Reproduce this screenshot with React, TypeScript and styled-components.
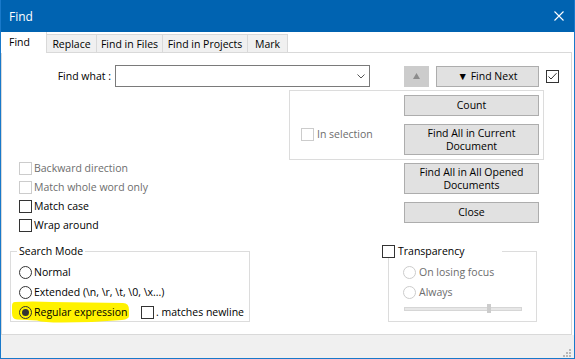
import React from "react";
import styled, { createGlobalStyle } from "styled-components";

const Global = createGlobalStyle`
  html, body { margin: 0; padding: 0; background: #ffffff; }
  body {
    font-family: "Open Sans", "Segoe UI", sans-serif;
    font-size: 10.5px;
    color: #000000;
  }
  * { box-sizing: border-box; }
`;

const Window = styled.div`
  width: 575px;
  height: 359px;
  display: flex;
  flex-direction: column;
  border: 1px solid #1979ca;
  border-top: none;
  background: #ffffff;
`;

const TitleBar = styled.div`
  height: 32px;
  flex: none;
  background: #0063b1;
  color: #ffffff;
  display: flex;
  align-items: center;
  justify-content: space-between;
  padding: 0 10px 0 8px;
  font-size: 12px;
`;

const TabStrip = styled.div`
  height: 20px;
  flex: none;
  display: flex;
  align-items: flex-end;
`;

const Tab = styled.div<{ $w: number; $active?: boolean }>`
  width: ${(p) => p.$w}px;
  flex: none;
  white-space: nowrap;
  ${(p) =>
    p.$active
      ? `
    height: 21px;
    margin-bottom: -1px;
    position: relative;
    z-index: 1;
    background: #ffffff;
    border-right: 1px solid #d9d9d9;
    padding-left: 8px;
    line-height: 20px;
  `
      : `
    height: 18px;
    margin-left: -1px;
    background: #f0f0f0;
    border: 1px solid #d9d9d9;
    border-bottom: none;
    text-align: center;
    line-height: 18px;
  `}
`;

const Panel = styled.div`
  height: 283px;
  flex: none;
  margin-right: 2px;
  border: 1px solid #d9d9d9;
  display: flex;
  flex-direction: column;
`;

const StatusStrip = styled.div`
  flex: 1;
  background: #f0f0f0;
  display: flex;
  justify-content: flex-end;
  align-items: flex-end;
  padding: 0 3px 1px 0;
`;

const TopRow = styled.div`
  margin-top: 12px;
  height: 22px;
  display: flex;
  align-items: center;
`;

const FieldLabel = styled.div`
  width: 109px;
  text-align: right;
  white-space: nowrap;
`;

const Combo = styled.div`
  margin-left: 4px;
  width: 255px;
  height: 22px;
  border: 1px solid #7a7a7a;
  display: flex;
  justify-content: flex-end;
  align-items: center;
  padding-right: 4px;
`;

const Button = styled.button<{ $w?: number; $h?: number; $ml?: number }>`
  width: ${(p) => p.$w ?? 135}px;
  height: ${(p) => p.$h ?? 21}px;
  margin: 0 0 0 ${(p) => p.$ml ?? 0}px;
  flex: none;
  padding: 0;
  font: inherit;
  color: #000000;
  line-height: 13px;
  background: #e1e1e1;
  border: 1px solid #adadad;
  display: flex;
  align-items: center;
  justify-content: center;
  text-align: center;
`;

const ArrowButton = styled.div`
  margin-left: 34px;
  width: 25px;
  height: 21px;
  flex: none;
  background: #cccccc;
  display: flex;
  align-items: center;
  justify-content: center;
`;

const Box = styled.span<{ $disabled?: boolean; $ml?: number }>`
  width: 13px;
  height: 13px;
  flex: none;
  margin-left: ${(p) => p.$ml ?? 0}px;
  border: 1px solid ${(p) => (p.$disabled ? "#cccccc" : "#333333")};
  background: #ffffff;
  display: flex;
  align-items: center;
  justify-content: center;
`;

const Circle = styled.span<{ $disabled?: boolean }>`
  width: 13px;
  height: 13px;
  flex: none;
  border-radius: 50%;
  border: 1px solid ${(p) => (p.$disabled ? "#cccccc" : "#333333")};
  display: flex;
  align-items: center;
  justify-content: center;
`;

const Dot = styled.span`
  width: 7px;
  height: 7px;
  border-radius: 50%;
  background: #333333;
`;

const OptionRow = styled.div<{ $disabled?: boolean; $gap?: number }>`
  display: flex;
  align-items: center;
  gap: ${(p) => p.$gap ?? 2}px;
  height: 13px;
  line-height: 13px;
  white-space: nowrap;
  color: ${(p) => (p.$disabled ? "#6d6d6d" : "#000000")};
`;

const SelectionGroup = styled.div`
  margin: 3px 0 0 287px;
  width: 255px;
  height: 70px;
  border: 1px solid #dcdcdc;
  display: flex;
  padding: 4px 3px 0 11px;
`;

const SelCell = styled.div`
  width: 103px;
  padding-top: 33px;
`;

const ButtonCol = styled.div<{ $pt?: number }>`
  display: flex;
  flex-direction: column;
  gap: 8px;
  padding-top: ${(p) => p.$pt ?? 0}px;
`;

const Middle = styled.div`
  margin-top: 2px;
  display: flex;
`;

const OptionsCol = styled.div`
  margin-left: 17px;
  width: 385px;
  display: flex;
  flex-direction: column;
  gap: 6px;
`;

const Bottom = styled.div`
  margin-top: 13px;
  display: flex;
  align-items: flex-start;
`;

const Group = styled.fieldset<{ $w: number; $ml: number; $pl: number }>`
  margin: 0 0 0 ${(p) => p.$ml}px;
  width: ${(p) => p.$w}px;
  min-width: 0;
  height: 77px;
  border: 1px solid #dcdcdc;
  padding: 8px 0 0 ${(p) => p.$pl}px;
  display: flex;
  flex-direction: column;
  gap: 7px;
`;

const Legend = styled.legend`
  padding: 0 2px;
  height: 13px;
  line-height: 13px;
  white-space: nowrap;
`;

const CheckLegend = styled.legend`
  margin-left: -21px;
  padding: 0;
  width: 120px;
  height: 13px;
  background: #ffffff;
  display: flex;
  align-items: center;
  gap: 3px;
  line-height: 13px;
  white-space: nowrap;
`;

const RegexRow = styled.div`
  display: flex;
  align-items: center;
  height: 13px;
  position: relative;
  z-index: 0;
`;

const RegexCell = styled.div`
  width: 122px;
  flex: none;
`;

const Highlight = styled.svg`
  position: absolute;
  left: -7px;
  top: -5px;
  z-index: -1;
`;

const Indent = styled.div`
  margin-left: 2px;
  display: flex;
  flex-direction: column;
  gap: 7px;
`;

const SliderWrap = styled.div`
  margin: -2px 0 0 1px;
  width: 118px;
  height: 9px;
  position: relative;
  display: flex;
  align-items: center;
`;

const Track = styled.div`
  width: 100%;
  height: 4px;
  background: #e7e7e7;
  border: 1px solid #d6d6d6;
`;

const Thumb = styled.div`
  position: absolute;
  top: 0;
  width: 4px;
  height: 9px;
  background: #cccccc;
`;

const CheckMark = () => (
  <svg width="11" height="11" viewBox="0 0 11 11">
    <polyline points="1.5,5.5 4,8 9.5,2.2" fill="none" stroke="#333" strokeWidth="1" />
  </svg>
);

const Check: React.FC<{ checked?: boolean; disabled?: boolean; ml?: number }> = ({ checked, disabled, ml }) => (
  <Box $disabled={disabled} $ml={ml}>{checked && <CheckMark />}</Box>
);

const Radio: React.FC<{ on?: boolean; disabled?: boolean }> = ({ on, disabled }) => (
  <Circle $disabled={disabled}>{on && <Dot />}</Circle>
);

export default function App() {
  const sliderValue = 70;
  return (
    <>
      <Global />
      <Window>
        <TitleBar>
          <span>Find</span>
          <svg width="10" height="10" viewBox="0 0 10 10">
            <path d="M0.5 0.5 L9.5 9.5 M9.5 0.5 L0.5 9.5" stroke="#fff" strokeWidth="1.1" />
          </svg>
        </TitleBar>
        <TabStrip>
          <Tab $w={46} $active>Find</Tab>
          <Tab $w={51}>Replace</Tab>
          <Tab $w={67}>Find in Files</Tab>
          <Tab $w={86}>Find in Projects</Tab>
          <Tab $w={41}>Mark</Tab>
        </TabStrip>
        <Panel>
          <TopRow>
            <FieldLabel>Find what :</FieldLabel>
            <Combo>
              <svg width="8" height="5" viewBox="0 0 8 5">
                <polyline points="0.5,0.5 4,4 7.5,0.5" fill="none" stroke="#555" strokeWidth="1" />
              </svg>
            </Combo>
            <ArrowButton>
              <svg width="7" height="6" viewBox="0 0 7 6">
                <polygon points="3.5,0 7,6 0,6" fill="#8c8c8c" />
              </svg>
            </ArrowButton>
            <Button $w={103} $ml={7}>▼ Find Next</Button>
            <Check checked ml={7} />
          </TopRow>
          <SelectionGroup>
            <SelCell>
              <OptionRow $disabled $gap={3}>
                <Check disabled />
                In selection
              </OptionRow>
            </SelCell>
            <ButtonCol>
              <Button>Count</Button>
              <Button $h={31}>Find All in Current<br />Document</Button>
            </ButtonCol>
          </SelectionGroup>
          <Middle>
            <OptionsCol>
              <OptionRow $disabled>
                <Check disabled />
                Backward direction
              </OptionRow>
              <OptionRow $disabled>
                <Check disabled />
                Match whole word only
              </OptionRow>
              <OptionRow>
                <Check />
                Match case
              </OptionRow>
              <OptionRow>
                <Check />
                Wrap around
              </OptionRow>
            </OptionsCol>
            <ButtonCol $pt={1}>
              <Button $h={31}>Find All in All Opened<br />Documents</Button>
              <Button>Close</Button>
            </ButtonCol>
          </Middle>
          <Bottom>
            <Group $w={240} $ml={8} $pl={6}>
              <Legend>Search Mode</Legend>
              <Indent>
                <OptionRow>
                  <Radio />
                  Normal
                </OptionRow>
                <OptionRow>
                  <Radio />
                  Extended (\n, \r, \t, \0, \x...)
                </OptionRow>
                <RegexRow>
                  <Highlight width="117" height="22" viewBox="0 0 117 22">
                    <path
                      d="M3,1 Q20,0 40,1 L111,2 Q117,2 117,9 L117,15 Q117,18 110,19 Q80,21.5 50,21.5 Q31,21.5 25,19.5 L5,18.5 Q0,18 0,12 L0,5 Q0,1 3,1 Z"
                      fill="#fff200"
                    />
                  </Highlight>
                  <RegexCell>
                    <OptionRow>
                      <Radio on />
                      Regular expression
                    </OptionRow>
                  </RegexCell>
                  <OptionRow>
                    <Check />
                    . matches newline
                  </OptionRow>
                </RegexRow>
              </Indent>
            </Group>
            <Group $w={149} $ml={138} $pl={14}>
              <CheckLegend>
                <Check />
                Transparency
              </CheckLegend>
              <OptionRow $disabled $gap={3}>
                <Radio disabled />
                On losing focus
              </OptionRow>
              <OptionRow $disabled $gap={3}>
                <Radio disabled />
                Always
              </OptionRow>
              <SliderWrap>
                <Track />
                <Thumb style={{ left: `${sliderValue}%` }} />
              </SliderWrap>
            </Group>
          </Bottom>
        </Panel>
        <StatusStrip>
          <svg width="8" height="8" viewBox="0 0 8 8">
            <rect x="6" y="0" width="2" height="2" fill="#b8b8b8" />
            <rect x="3" y="3" width="2" height="2" fill="#b8b8b8" />
            <rect x="6" y="3" width="2" height="2" fill="#b8b8b8" />
            <rect x="0" y="6" width="2" height="2" fill="#b8b8b8" />
            <rect x="3" y="6" width="2" height="2" fill="#b8b8b8" />
            <rect x="6" y="6" width="2" height="2" fill="#b8b8b8" />
          </svg>
        </StatusStrip>
      </Window>
    </>
  );
}
